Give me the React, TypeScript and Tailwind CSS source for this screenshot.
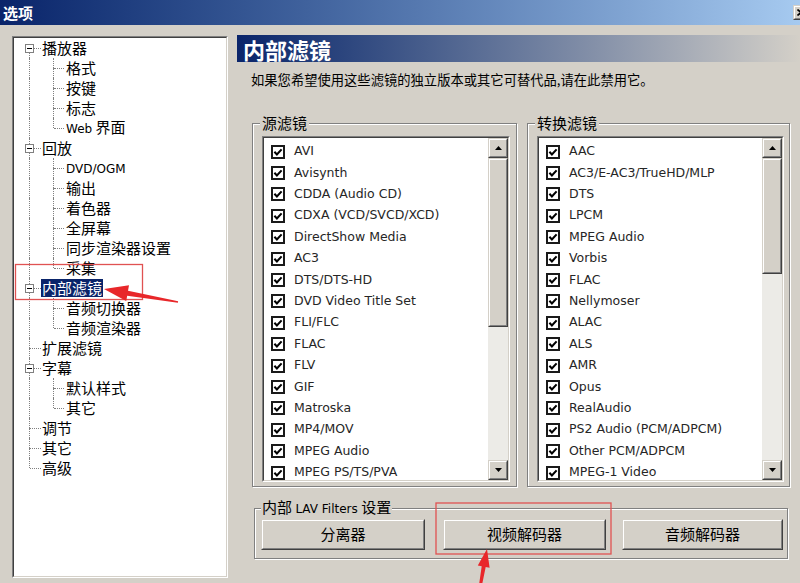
import type { ReactNode } from 'react';

const lat = "font-['DejaVu_Sans',sans-serif] text-[12px]";

type TreeItem = {
  label: ReactNode;
  level: 0 | 1;
  box?: boolean;
  first?: boolean;
  last?: boolean;
  lastChild?: boolean;
  selected?: boolean;
};

const tree: TreeItem[] = [
  { label: '播放器', level: 0, box: true, first: true },
  { label: '格式', level: 1 },
  { label: '按键', level: 1 },
  { label: '标志', level: 1 },
  { label: <><span className={lat}>Web</span> 界面</>, level: 1, lastChild: true },
  { label: '回放', level: 0, box: true },
  { label: <span className={lat}>DVD/OGM</span>, level: 1 },
  { label: '输出', level: 1 },
  { label: '着色器', level: 1 },
  { label: '全屏幕', level: 1 },
  { label: '同步渲染器设置', level: 1 },
  { label: '采集', level: 1, lastChild: true },
  { label: '内部滤镜', level: 0, box: true, selected: true },
  { label: '音频切换器', level: 1 },
  { label: '音频渲染器', level: 1, lastChild: true },
  { label: '扩展滤镜', level: 0 },
  { label: '字幕', level: 0, box: true },
  { label: '默认样式', level: 1 },
  { label: '其它', level: 1, lastChild: true },
  { label: '调节', level: 0 },
  { label: '其它', level: 0 },
  { label: '高级', level: 0, last: true },
];

const sourceFilters = [
  'AVI', 'Avisynth', 'CDDA (Audio CD)', 'CDXA (VCD/SVCD/XCD)', 'DirectShow Media', 'AC3',
  'DTS/DTS-HD', 'DVD Video Title Set', 'FLI/FLC', 'FLAC', 'FLV', 'GIF', 'Matroska', 'MP4/MOV',
  'MPEG Audio', 'MPEG PS/TS/PVA',
];

const transformFilters = [
  'AAC', 'AC3/E-AC3/TrueHD/MLP', 'DTS', 'LPCM', 'MPEG Audio', 'Vorbis', 'FLAC', 'Nellymoser',
  'ALAC', 'ALS', 'AMR', 'Opus', 'RealAudio', 'PS2 Audio (PCM/ADPCM)', 'Other PCM/ADPCM',
  'MPEG-1 Video',
];

const dot = 'absolute border-dotted border-[#808080]';

function TreeRow({ item }: { item: TreeItem }) {
  return (
    <div className="flex h-[20px] items-center">
      <div className="relative w-[28px] shrink-0 self-stretch">
        {!item.first && (
          <span className={`${dot} left-[15px] top-0 border-l ${item.level === 0 ? 'h-[10px]' : 'h-full'}`} />
        )}
        {item.level === 0 && !item.last && (
          <span className={`${dot} left-[15px] top-[10px] h-[10px] border-l`} />
        )}
        {item.level === 0 && <span className={`${dot} left-[16px] top-[10px] w-[11px] border-t`} />}
        {item.box && (
          <span className="absolute left-[11px] top-[6px] flex h-[9px] w-[9px] items-center justify-center border border-[#808080] bg-white">
            <span className="w-[5px] border-t border-black" />
          </span>
        )}
      </div>
      {item.level === 1 && (
        <div className="relative w-[24px] shrink-0 self-stretch">
          <span className={`${dot} left-[11px] top-0 h-[10px] border-l`} />
          {!item.lastChild && <span className={`${dot} left-[11px] top-[10px] h-[10px] border-l`} />}
          <span className={`${dot} left-[12px] top-[10px] w-[10px] border-t`} />
        </div>
      )}
      <span
        className={`whitespace-nowrap text-[15px] leading-[18px] ${
          item.selected ? '-ml-[1px] bg-[#0a246a] px-[1px] text-white' : 'text-black'
        }`}
      >
        {item.label}
      </span>
    </div>
  );
}

function Sunken({ className, children }: { className: string; children: ReactNode }) {
  return (
    <div className={`border border-b-white border-l-[#808080] border-r-white border-t-[#808080] ${className}`}>
      <div className="h-full border border-b-[#d4d0c8] border-l-[#404040] border-r-[#d4d0c8] border-t-[#404040]">
        {children}
      </div>
    </div>
  );
}

function Raised({ className, children }: { className: string; children?: ReactNode }) {
  return (
    <div className={`border border-b-[#404040] border-l-[#d4d0c8] border-r-[#404040] border-t-[#d4d0c8] bg-[#d4d0c8] ${className}`}>
      <div className="flex h-full items-center justify-center border border-b-[#808080] border-l-white border-r-[#808080] border-t-white">
        {children}
      </div>
    </div>
  );
}

function Arrow({ up }: { up?: boolean }) {
  return (
    <svg width="7" height="4" viewBox="0 0 7 4">
      <path d={up ? 'M0 4 L3.5 0 L7 4 Z' : 'M0 0 L3.5 4 L7 0 Z'} fill="#000" />
    </svg>
  );
}

function Check() {
  return (
    <span className="flex h-[14px] w-[14px] shrink-0 items-center justify-center border-2 border-[#1a1a1a] bg-white">
      <svg width="10" height="10" viewBox="0 0 10 10">
        <path d="M1.4 4.8 L3.9 7.4 L8.6 2.4" fill="none" stroke="#000" strokeWidth="2.1" />
      </svg>
    </span>
  );
}

function FilterList({ items, thumb, width }: { items: string[]; thumb: number; width: string }) {
  return (
    <Sunken className={`${width} h-[346px] bg-white`}>
      <div className="flex h-full">
        <div className="flex-1 overflow-hidden pt-[3px]">
          {items.map((name) => (
            <div key={name} className="flex h-[21.4px] items-center gap-[9px] pl-[7px]">
              <Check />
              <span className="whitespace-nowrap font-['DejaVu_Sans',sans-serif] text-[12.5px] text-[#262626]">
                {name}
              </span>
            </div>
          ))}
        </div>
        <div className="flex w-[20px] flex-col bg-[#ecebe7]">
          <Raised className="h-[20px]">
            <Arrow up />
          </Raised>
          <Raised className="">
            <div style={{ height: thumb }} />
          </Raised>
          <div className="flex-1" />
          <Raised className="h-[20px]">
            <Arrow />
          </Raised>
        </div>
      </div>
    </Sunken>
  );
}

const etched = 'border border-[#808080] shadow-[inset_1px_1px_0_#fff,1px_1px_0_#fff]';

export default function App() {
  return (
    <div className="relative h-[583px] w-[800px] overflow-hidden bg-[#d4d0c8] font-['Noto_Sans_CJK_SC',sans-serif]">
      {/* title bar */}
      <div className="flex h-[25px] items-center justify-between bg-gradient-to-r from-[#0a246a] to-[#a6caf0] pl-[3px]">
        <span className="text-[15px] font-bold leading-none text-white">选项</span>
        <Raised className="-mr-[9px] h-[15px] w-[16px]">
          <svg width="8" height="7" viewBox="0 0 8 7">
            <path d="M0.5 0.5 L7.5 6.5 M7.5 0.5 L0.5 6.5" stroke="#000" strokeWidth="1.6" />
          </svg>
        </Raised>
      </div>

      <div className="flex">
        {/* tree */}
        <Sunken className="ml-[12px] mt-[11px] h-[542px] w-[216px] bg-white">
          {tree.map((item, i) => (
            <TreeRow key={i} item={item} />
          ))}
        </Sunken>

        {/* right side */}
        <div className="ml-[9px] flex-1">
          <div className="mt-[10px] flex h-[27px] items-center bg-gradient-to-r from-[#0a246a] to-[#d4d0c8] pl-[6px]">
            <span className="text-[22px] font-bold leading-none text-white">内部滤镜</span>
          </div>
          <p className="mt-[8px] pl-[14px] text-[13.3px] leading-[20px] text-black">
            如果您希望使用这些滤镜的独立版本或其它可替代品,请在此禁用它。
          </p>

          <div className="mt-[23px] flex gap-[10px] pl-[15px]">
            <fieldset className={`${etched} w-[265px] pb-[4px] pl-[9px] pt-[3px]`}>
              <legend className="-ml-[2px] bg-[#d4d0c8] px-[2px] text-[15px] leading-[20px] text-black">源滤镜</legend>
              <FilterList items={sourceFilters} thumb={165} width="w-[248px]" />
            </fieldset>
            <fieldset className={`${etched} w-[263px] pb-[4px] pl-[9px] pt-[3px]`}>
              <legend className="-ml-[2px] bg-[#d4d0c8] px-[2px] text-[15px] leading-[20px] text-black">转换滤镜</legend>
              <FilterList items={transformFilters} thumb={112} width="w-[247px]" />
            </fieldset>
          </div>

          <fieldset className={`${etched} ml-[17px] mt-[10px] w-[534px] pb-[8px] pl-[6px] pt-0`}>
            <legend className="bg-[#d4d0c8] px-[1px] text-[15px] leading-[20px] text-black">
              内部 <span className={lat}>LAV Filters</span> 设置
            </legend>
            <div className="flex">
              <Raised className="h-[31px] w-[164px]">
                <span className="text-[15px] text-black">分离器</span>
              </Raised>
              <Raised className="ml-[18px] h-[31px] w-[163px]">
                <span className="text-[15px] text-black">视频解码器</span>
              </Raised>
              <Raised className="ml-[16px] h-[31px] w-[161px]">
                <span className="text-[15px] text-black">音频解码器</span>
              </Raised>
            </div>
          </fieldset>
        </div>
      </div>

      {/* red annotations */}
      <svg className="pointer-events-none absolute left-0 top-0" width="800" height="583">
        <rect x="15.5" y="264.5" width="127" height="35" fill="none" stroke="#e05252" strokeWidth="1.3" />
        <rect x="436" y="503" width="175" height="51" fill="none" stroke="#e05252" strokeWidth="1.3" />
        <polygon
          points="104,289 129,285.3 128,290.7 178.1,301.2 177.9,302.8 127.2,295.7 126.2,301.1"
          fill="#e8272a"
        />
        <polygon points="487,549 489.6,567.8 485.7,567.1 482,585 479,585 481.7,566.3 477.8,565.6" fill="#e8272a" />
      </svg>
    </div>
  );
}
